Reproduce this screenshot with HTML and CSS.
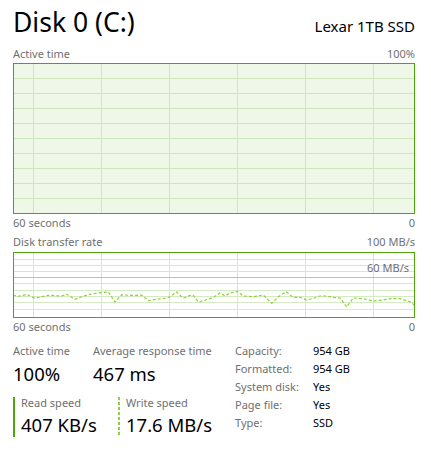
FILE: index.html
```html
<!DOCTYPE html>
<html>
<head>
<meta charset="utf-8">
<link rel="stylesheet" href="styles.css">
</head>
<body>
<div class="page">
  <header class="head">
    <h1 class="title">Disk 0 (C:)</h1>
    <span class="model">Lexar 1TB SSD</span>
  </header>

  <div class="axis axis-top"><span>Active time</span><span>100%</span></div>
  <svg class="chart chart1" width="402" height="151" viewBox="0 0 402 151">
    <rect x="0" y="0" width="402" height="151" fill="#eff7e9"/>
    <g stroke="#cde6bd" stroke-width="1">
      <line x1="20.5" y1="0" x2="20.5" y2="151"/>
      <line x1="88.5" y1="0" x2="88.5" y2="151"/>
      <line x1="156.5" y1="0" x2="156.5" y2="151"/>
      <line x1="224.5" y1="0" x2="224.5" y2="151"/>
      <line x1="292.5" y1="0" x2="292.5" y2="151"/>
      <line x1="360.5" y1="0" x2="360.5" y2="151"/>
      <line x1="0" y1="15.5" x2="402" y2="15.5"/>
      <line x1="0" y1="30.5" x2="402" y2="30.5"/>
      <line x1="0" y1="45.5" x2="402" y2="45.5"/>
      <line x1="0" y1="60.5" x2="402" y2="60.5"/>
      <line x1="0" y1="75.5" x2="402" y2="75.5"/>
      <line x1="0" y1="90.5" x2="402" y2="90.5"/>
      <line x1="0" y1="105.5" x2="402" y2="105.5"/>
      <line x1="0" y1="120.5" x2="402" y2="120.5"/>
      <line x1="0" y1="135.5" x2="402" y2="135.5"/>
    </g>
    <rect x="0.5" y="0.5" width="401" height="150" fill="none" stroke="#4da60c" stroke-width="1"/>
  </svg>
  <div class="axis axis-mid"><span>60 seconds</span><span>0</span></div>
  <div class="axis axis-label"><span>Disk transfer rate</span><span>100 MB/s</span></div>
  <div class="chart-wrap">
    <svg class="chart chart2" width="402" height="66" viewBox="0 0 402 66">
      <rect x="0" y="0" width="402" height="66" fill="#ffffff"/>
      <g stroke="#d3eac5" stroke-width="1">
        <line x1="20.5" y1="0" x2="20.5" y2="66"/>
        <line x1="88.5" y1="0" x2="88.5" y2="66"/>
        <line x1="156.5" y1="0" x2="156.5" y2="66"/>
        <line x1="224.5" y1="0" x2="224.5" y2="66"/>
        <line x1="292.5" y1="0" x2="292.5" y2="66"/>
        <line x1="360.5" y1="0" x2="360.5" y2="66"/>
        <line x1="0" y1="7.5" x2="402" y2="7.5"/>
        <line x1="0" y1="13.5" x2="402" y2="13.5"/>
        <line x1="0" y1="19.5" x2="402" y2="19.5"/>
        <line x1="0" y1="31.5" x2="402" y2="31.5"/>
        <line x1="0" y1="38.5" x2="402" y2="38.5"/>
        <line x1="0" y1="44.5" x2="402" y2="44.5"/>
        <line x1="0" y1="50.5" x2="402" y2="50.5"/>
        <line x1="0" y1="57.5" x2="402" y2="57.5"/>
      </g>
      <line x1="0" y1="25.5" x2="402" y2="25.5" stroke="#a9d28e" stroke-width="1"/>
      <polyline fill="none" stroke="#8ed23a" stroke-width="1.2" stroke-dasharray="3 2"
        points="0,43 5,44.3 10,43.3 13.7,42.3 17,44 22,46.3 28.7,44.7 37,43 42,43.7 48.7,44 53.7,42.3 62,47.3 68.7,44.7 77,42.3 87,40.7 95.3,40 102,50 108.7,42.7 115.3,43.3 122,43.3 128.7,43 135.3,48.7 143.7,47.3 153.7,46 157,44.7 163.7,40 170.3,46.3 177,43.3 180.3,43.3 185.3,50 192,48.3 200.3,45.3 207,41 212,44 217,41 224.3,39.3 230.3,44 240.3,44.7 250.3,43 258.7,51.3 265.3,44.7 273,39.7 280.3,45.3 287,45.3 293.7,48 300.3,46.3 307,44 313.7,44 320.3,45.3 327,46 333.7,55 340.3,46 350.3,46.7 360.3,49 370.3,48 377,46.7 387,46.7 397,49.7 401.3,53"/>
      <rect x="0.5" y="0.5" width="401" height="65" fill="none" stroke="#4da60c" stroke-width="1"/>
    </svg>
    <span class="inner-label">60 MB/s</span>
  </div>
  <div class="axis axis-mid"><span>60 seconds</span><span>0</span></div>

  <section class="stats">
    <div class="stats-left">
      <div class="row-top">
        <div class="stat stat-active">
          <div class="stat-label">Active time</div>
          <div class="stat-value">100%</div>
        </div>
        <div class="stat">
          <div class="stat-label">Average response time</div>
          <div class="stat-value">467 ms</div>
        </div>
      </div>
      <div class="row-speed">
        <div class="speed speed-read">
          <div class="bar bar-solid"></div>
          <div class="speed-body">
            <div class="stat-label">Read speed</div>
            <div class="stat-value">407 KB/s</div>
          </div>
        </div>
        <div class="speed speed-write">
          <div class="bar bar-dashed"></div>
          <div class="speed-body">
            <div class="stat-label">Write speed</div>
            <div class="stat-value">17.6 MB/s</div>
          </div>
        </div>
      </div>
    </div>
    <dl class="props">
      <dt>Capacity:</dt><dd>954 GB</dd>
      <dt>Formatted:</dt><dd>954 GB</dd>
      <dt>System disk:</dt><dd>Yes</dd>
      <dt>Page file:</dt><dd>Yes</dd>
      <dt>Type:</dt><dd>SSD</dd>
    </dl>
  </section>
</div>
</body>
</html>
```
FILE: styles.css
```css
html, body {
  margin: 0;
  padding: 0;
  background: #ffffff;
}
body {
  font-family: "Noto Sans", "Open Sans", sans-serif;
  color: #000000;
  width: 431px;
  height: 452px;
  overflow: hidden;
}
.page {
  padding: 0 16px 0 13px;
  width: 402px;
}
.head {
  display: flex;
  justify-content: space-between;
  align-items: baseline;
  height: 44px;
  padding-top: 2px;
  box-sizing: border-box;
}
.title {
  margin: 0;
  font-weight: normal;
  font-size: 26.5px;
  line-height: 40px;
  color: #000;
}
.model {
  font-size: 15px;
  color: #000;
}
.axis {
  display: flex;
  justify-content: space-between;
  font-size: 11px;
  color: #707070;
}
.axis-top {
  height: 19px;
  line-height: 19px;
}
.axis-mid {
  height: 18px;
  line-height: 18px;
}
.axis-label {
  height: 20px;
  line-height: 20px;
}
.chart {
  display: block;
}
.chart-wrap {
  position: relative;
  width: 402px;
  height: 66px;
}
.inner-label {
  position: absolute;
  right: 6px;
  top: 7px;
  font-size: 11px;
  line-height: 18px;
  color: #707070;
}
.stats {
  display: flex;
  padding-top: 6px;
}
.stats-left {
  width: 222px;
  padding-top: 1px;
}
.row-top {
  display: flex;
}
.stat-active {
  width: 80px;
}
.stat-label {
  font-size: 11px;
  line-height: 16px;
  color: #707070;
}
.stat-value {
  font-size: 18.5px;
  line-height: 24px;
  margin-top: 3px;
  color: #000;
}
.row-speed {
  display: flex;
  margin-top: 11px;
}
.speed {
  display: flex;
  height: 40px;
}
.speed-read {
  width: 105px;
}
.bar {
  width: 2px;
  flex: none;
  margin-right: 6px;
}
.bar-solid {
  background: #4da60c;
}
.bar-dashed {
  background: repeating-linear-gradient(to bottom, #8ed23a 0, #8ed23a 3px, transparent 3px, transparent 5px);
}
.speed-body .stat-label {
  line-height: 12px;
}
.speed-body .stat-value {
  margin-top: 4px;
}
.props {
  display: grid;
  grid-template-columns: 78px auto;
  grid-auto-rows: 18px;
  margin: 0;
  font-size: 11px;
  line-height: 18px;
}
.props dt {
  color: #707070;
}
.props dd {
  margin: 0;
  color: #000;
}
```
